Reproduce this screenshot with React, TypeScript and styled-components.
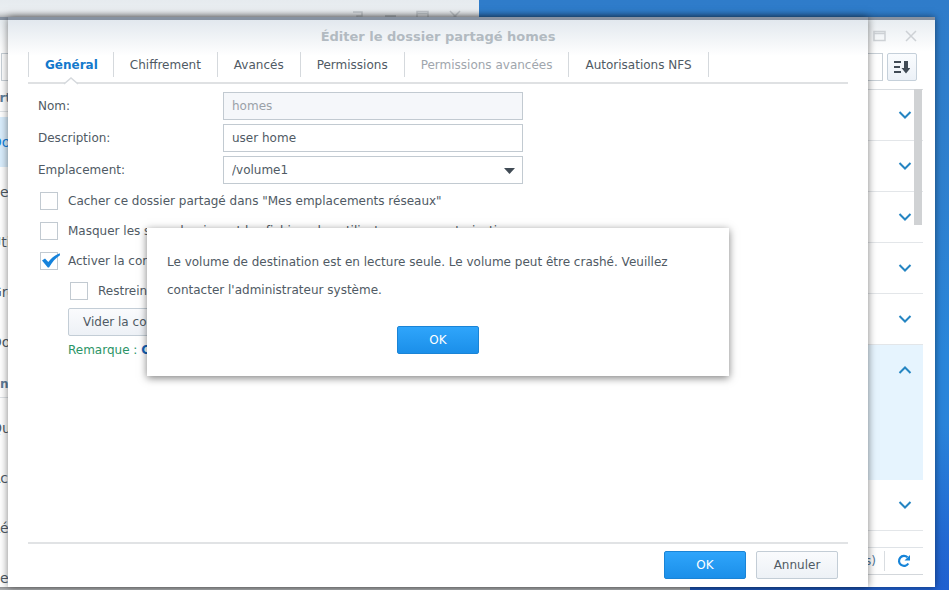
import React from "react";
import styled, { createGlobalStyle, css } from "styled-components";

const font = '"DejaVu Sans", Verdana, sans-serif';

const Global = createGlobalStyle`
  *, *::before, *::after { box-sizing: border-box; }
  html, body, #root { height: 100%; }
  body { margin: 0; overflow: hidden; font: 12px/18px ${font}; color: #505a64; }
  button, input, select { font: inherit; color: inherit; }
  button { cursor: pointer; }
`;

const Desktop = styled.main`
  position: relative;
  height: 100vh;
  overflow: hidden;
  background: linear-gradient(180deg, #2f7cca 0%, #2f80ce 30%, #2a86da 60%, #2a84da 72%, #2268d2 92%, #2060d0 100%);
`;

const windowFrame = css`
  position: absolute;
  display: flex;
  flex-direction: column;
  background: #fff;
`;

const BackWindow = styled.section`
  ${windowFrame}
  top: 0;
  left: 0;
  width: 479px;
  height: 200px;
  background: linear-gradient(180deg, #e6ebef 0, #eef1f4 20px);
`;

const BackWindowFoot = styled.section`
  ${windowFrame}
  bottom: 0;
  left: 0;
  width: 690px;
  height: 40px;
  background: #c4c6c8;
`;

const BackWindowTools = styled.div`
  display: flex;
  justify-content: flex-end;
  gap: 20px;
  padding: 10px 18px 0 0;
  color: #c6cbd0;
`;

const Explorer = styled.section`
  ${windowFrame}
  top: 17px;
  left: -40px;
  right: 14px;
  bottom: 3px;
  border-top: 3px solid #8792a1;
  box-shadow: 0 0 7px rgba(0, 0, 0, 0.5);
  background: linear-gradient(180deg, #e8edf1 0, #fff 32px);
`;

const ExplorerTools = styled.div`
  display: flex;
  justify-content: flex-end;
  gap: 19px;
  height: 33px;
  padding: 10px 18px 0 0;
  color: #cdd1d5;
`;

const ExplorerBody = styled.div`
  display: flex;
  flex: 1;
  min-height: 0;
`;

const Sidebar = styled.nav`
  display: flex;
  flex-direction: column;
  width: 240px;
  overflow: hidden;
`;

const SearchBox = styled.input`
  flex: none;
  height: 28px;
  margin-left: 41px;
  border: 1px solid #c8d0d7;
  background: #fff;
`;

const GroupTitle = styled.h2`
  display: flex;
  flex: none;
  align-items: center;
  height: 31px;
  margin: 0 0 5px;
  padding: 4px 0 0 23px;
  border-bottom: 1px solid #dfe3e7;
  color: #5f7c98;
  font-size: 12px;
`;

const NavItem = styled.a<{ $active?: boolean }>`
  display: flex;
  flex: none;
  align-items: center;
  height: 50px;
  padding-left: 31px;
  font-size: 14px;
  text-decoration: none;
  white-space: nowrap;
  color: ${(p) => (p.$active ? "#1582dc" : "#505a64")};
  background: ${(p) => (p.$active ? "#d9edfc" : "transparent")};
`;

const FolderPane = styled.div`
  display: flex;
  flex: 1;
  flex-direction: column;
  padding: 0 12px 12px 20px;
`;

const FolderToolbar = styled.div`
  display: flex;
  justify-content: flex-end;
  gap: 4px;
  padding: 0 6px 8px 0;
`;

const FilterBox = styled.input`
  width: 180px;
  height: 28px;
  border: 1px solid #c8d0d7;
  background: #fff;
`;

const SortButton = styled.button`
  display: grid;
  place-items: center;
  width: 30px;
  height: 28px;
  padding: 0;
  border: 1px solid #c5d0da;
  border-radius: 2px;
  background: linear-gradient(180deg, #fafcfe, #ecf1f7);
  color: #414b55;
`;

const FolderList = styled.div`
  position: relative;
  flex: 1;
  border-top: 1px solid #d9dde1;
`;

const FolderRow = styled.button<{ $open?: boolean }>`
  display: flex;
  align-items: flex-start;
  justify-content: flex-end;
  width: 100%;
  height: ${(p) => (p.$open ? 135 : 51)}px;
  padding: 21px 11px 0 0;
  border: 0;
  border-bottom: 1px solid ${(p) => (p.$open ? "#e6f4fe" : "#e3e6e9")};
  background: ${(p) => (p.$open ? "#e6f4fe" : "transparent")};
  color: #2585c2;
`;

const ScrollThumb = styled.div`
  position: absolute;
  top: -1px;
  right: 1px;
  width: 8px;
  height: 136px;
  background: #d0d2d4;
`;

const StatusBar = styled.div`
  display: flex;
  align-items: center;
  justify-content: flex-end;
  gap: 8px;
  height: 28px;
  border-top: 1px solid #dfe3e7;
  border-bottom: 1px solid #d3d7db;
  color: #4f7698;
`;

const RefreshButton = styled.button`
  display: grid;
  place-items: center;
  width: 39px;
  height: 20px;
  padding: 0;
  border: 0;
  border-left: 1px solid #d9dde1;
  background: none;
  color: #1583d8;
`;

const EditDialog = styled.section`
  ${windowFrame}
  top: 17px;
  left: 8px;
  right: 81px;
  bottom: 3px;
  border-top: 3px solid #8792a1;
  background: linear-gradient(180deg, #e2e8ee 0, #fff 36px);
  box-shadow: 0 0 8px rgba(0, 0, 0, 0.5);
`;

const DialogTitle = styled.h1`
  margin: 0;
  padding: 8px 0 6px;
  color: #b2bac1;
  font-size: 13px;
  line-height: 18px;
  text-align: center;
`;

const Tabs = styled.div`
  display: flex;
  height: 32px;
  margin: 0 20px;
  border-bottom: 2px solid #dfe1e3;
`;

const Tab = styled.button<{ $active?: boolean }>`
  position: relative;
  height: 25px;
  padding: 0 ${(p) => (p.$active ? 15 : 16)}px 0 16px;
  border: 0;
  border-left: 1px solid #d5d9dd;
  background: none;
  white-space: nowrap;
  color: ${(p) => (p.$active ? "#1379cc" : "#505a64")};
  font-weight: ${(p) => (p.$active ? 700 : 400)};

  &:last-child { border-right: 1px solid #d5d9dd; }
  &:disabled { color: #a0a6ad; cursor: default; }
`;

const Notch = styled.svg`
  position: absolute;
  top: 25px;
  left: calc(50% - 8px);
`;

const Form = styled.form`
  display: flex;
  flex: 1;
  flex-direction: column;
  padding: 8px 30px 0;
`;

const Field = styled.div`
  display: grid;
  grid-template-columns: 185px minmax(0, 300px);
  height: 28px;
  margin-bottom: 4px;
`;

const FieldLabel = styled.label`
  line-height: 28px;
`;

const TextInput = styled.input`
  width: 100%;
  height: 28px;
  padding: 0 8px;
  border: 1px solid #c2cad1;
  border-radius: 0;
  background: #fff;

  &:disabled { background: #f5f7fa; color: #9aa1a8; }
`;

const SelectWrap = styled.div`
  position: relative;
`;

const Select = styled.select`
  appearance: none;
  width: 100%;
  height: 28px;
  padding: 0 8px;
  border: 1px solid #c2cad1;
  border-radius: 0;
  background: #fff;
`;

const SelectArrow = styled.svg`
  position: absolute;
  top: 12px;
  right: 8px;
  pointer-events: none;
`;

const CheckLine = styled.label<{ $nested?: boolean }>`
  display: flex;
  align-items: center;
  gap: 10px;
  height: 30px;
  padding-left: ${(p) => (p.$nested ? 32 : 2)}px;
  white-space: nowrap;
`;

const CheckGroup = styled.div`
  display: flex;
  flex-direction: column;
  margin: -2px 0 2px;
`;

const CheckBox = styled.span`
  position: relative;
  flex: none;
  width: 18px;
  height: 18px;

  input {
    appearance: none;
    display: block;
    width: 18px;
    height: 18px;
    margin: 0;
    border: 1px solid #c2cad1;
    background: #fff;
  }
  svg {
    position: absolute;
    top: 0;
    left: 0;
    display: none;
    pointer-events: none;
  }
  input:checked + svg { display: block; }
`;

const Button = styled.button<{ $primary?: boolean }>`
  height: 28px;
  min-width: 82px;
  padding: 0 14px;
  border-radius: 2px;
  border: 1px solid ${(p) => (p.$primary ? "#1a84d6" : "#c3cdd6")};
  background: ${(p) =>
    p.$primary ? "linear-gradient(180deg, #2fa5fb, #1b8fe9)" : "linear-gradient(180deg, #fafbfd, #edf1f6)"};
  color: ${(p) => (p.$primary ? "#fff" : "#505a64")};
`;

const Indented = styled.div`
  padding-left: 30px;
`;

const Remark = styled.p`
  margin: 5px 0 0;
  padding-left: 30px;
  color: #2b9466;
`;

const RemarkLink = styled.a`
  color: #1263b8;
  font-weight: 700;
  text-decoration: none;
`;

const DialogFooter = styled.footer`
  display: flex;
  justify-content: flex-end;
  gap: 10px;
  margin: 0 20px;
  padding: 7px 10px 8px;
  border-top: 2px solid #e1e3e5;
`;

const AlertLayer = styled.div`
  position: absolute;
  inset: -3px 0 0;
  display: grid;
  place-items: center;
`;

const Alert = styled.div`
  display: flex;
  flex-direction: column;
  align-items: center;
  gap: 22px;
  width: min(582px, 100%);
  padding: 20px 20px 22px;
  background: #fff;
  box-shadow: 0 2px 8px rgba(0, 0, 0, 0.5);
`;

const AlertText = styled.p`
  width: 100%;
  margin: 0;
  line-height: 28px;
`;

const CloseIcon = () => (
  <svg width="12" height="12" viewBox="0 0 12 12" stroke="currentColor" strokeWidth="1.5" fill="none">
    <path d="M1 1l10 10M11 1L1 11" />
  </svg>
);

const MaximizeIcon = () => (
  <svg width="13" height="12" viewBox="0 0 13 12" stroke="currentColor" fill="none">
    <path d="M1 1.5h11v9H1zM1 3.5h11" strokeWidth="1.5" />
  </svg>
);

const MinimizeIcon = () => (
  <svg width="12" height="12" viewBox="0 0 12 12" stroke="currentColor" strokeWidth="2">
    <path d="M1 6h11" />
  </svg>
);

const HelpIcon = () => (
  <svg width="12" height="12" viewBox="0 0 12 12" stroke="currentColor" strokeWidth="1.5" fill="none">
    <path d="M1 2h9v4H5v3M5 10.5V12" />
  </svg>
);

const Chevron = ({ up }: { up?: boolean }) => (
  <svg width="14" height="8" viewBox="0 0 14 8" fill="none" stroke="currentColor" strokeWidth="2">
    <path d={up ? "M1.5 7L7 1.5 12.5 7" : "M1.5 1L7 6.5 12.5 1"} />
  </svg>
);

const SortIcon = () => (
  <svg width="16" height="14" viewBox="0 0 16 14" fill="currentColor">
    <path d="M0 1h7v2H0zM0 6h6v2H0zM0 11h7v2H0zM10 1h4v7h2.500L12 13.500 7.500 8H10z" />
  </svg>
);

const RefreshIcon = () => (
  <svg width="14" height="14" viewBox="0 0 14 14" fill="none" stroke="currentColor" strokeWidth="2.200">
    <path d="M11.300 9.500A5 5 0 1 1 10.500 3.300" />
    <path d="M13 1v5.500H7.500z" fill="currentColor" stroke="none" />
  </svg>
);

const sharing = ["Dossier partagé", "Services de fichiers", "Utilisateur", "Groupe", "Domaine/LDAP"];
const connectivity = ["QuickConnect", "Accès externe", "Réseau", "Serveur DHCP"];
const folders = [false, false, false, false, false, true, false];
const tabs = [
  { label: "Général", active: true },
  { label: "Chiffrement" },
  { label: "Avancés" },
  { label: "Permissions" },
  { label: "Permissions avancées", disabled: true },
  { label: "Autorisations NFS" },
];

function Check({ label, checked, nested }: { label: string; checked?: boolean; nested?: boolean }) {
  return (
    <CheckLine $nested={nested}>
      <CheckBox>
        <input type="checkbox" defaultChecked={checked} />
        <svg width="21" height="18" viewBox="0 0 21 18" fill="#1583dc">
          <path d="M2 8.500L5 6.500 8.300 10C11.500 6 15 3 19.800 1.300L20 3.200C15.500 6 11.800 10.500 9 15.500H7.800z" />
        </svg>
      </CheckBox>
      {label}
    </CheckLine>
  );
}

export default function App() {
  return (
    <Desktop>
      <Global />
      <BackWindow>
        <BackWindowTools>
          <HelpIcon />
          <MinimizeIcon />
          <MaximizeIcon />
          <CloseIcon />
        </BackWindowTools>
      </BackWindow>
      <BackWindowFoot />

      <Explorer>
        <ExplorerTools>
          <MaximizeIcon />
          <CloseIcon />
        </ExplorerTools>
        <ExplorerBody>
          <Sidebar>
            <SearchBox aria-label="Rechercher" />
            <GroupTitle>Partage de fichiers</GroupTitle>
            {sharing.map((item, i) => (
              <NavItem key={item} href="#" $active={i === 0}>{item}</NavItem>
            ))}
            <GroupTitle>Connectivité</GroupTitle>
            {connectivity.map((item) => (
              <NavItem key={item} href="#">{item}</NavItem>
            ))}
          </Sidebar>
          <FolderPane>
            <FolderToolbar>
              <FilterBox aria-label="Filtrer" />
              <SortButton aria-label="Trier"><SortIcon /></SortButton>
            </FolderToolbar>
            <FolderList>
              {folders.map((open, i) => (
                <FolderRow key={i} $open={open} aria-expanded={open} aria-label={`Dossier ${i + 1}`}>
                  <Chevron up={open} />
                </FolderRow>
              ))}
              <ScrollThumb />
            </FolderList>
            <StatusBar>
              <span>7 élément(s)</span>
              <RefreshButton aria-label="Actualiser"><RefreshIcon /></RefreshButton>
            </StatusBar>
          </FolderPane>
        </ExplorerBody>
      </Explorer>

      <EditDialog role="dialog" aria-labelledby="dialog-title">
        <DialogTitle id="dialog-title">Éditer le dossier partagé homes</DialogTitle>
        <Tabs role="tablist">
          {tabs.map((t) => (
            <Tab key={t.label} role="tab" type="button" aria-selected={!!t.active} $active={t.active} disabled={t.disabled}>
              {t.label}
              {t.active && (
                <Notch width="16" height="8" viewBox="0 0 16 8">
                  <path d="M0 8L8 1l8 7z" fill="#fff" />
                  <path d="M1 7L8 1l7 6" fill="none" stroke="#d5d9dd" strokeWidth="1.500" />
                </Notch>
              )}
            </Tab>
          ))}
        </Tabs>
        <Form>
          <Field>
            <FieldLabel htmlFor="name">Nom:</FieldLabel>
            <TextInput id="name" defaultValue="homes" disabled />
          </Field>
          <Field>
            <FieldLabel htmlFor="description">Description:</FieldLabel>
            <TextInput id="description" defaultValue="user home" />
          </Field>
          <Field>
            <FieldLabel htmlFor="location">Emplacement:</FieldLabel>
            <SelectWrap>
              <Select id="location" defaultValue="/volume1">
                <option>/volume1</option>
              </Select>
              <SelectArrow width="11" height="6" viewBox="0 0 11 6"><path d="M0 0h11L5.500 6z" fill="#414b55" /></SelectArrow>
            </SelectWrap>
          </Field>
          <CheckGroup>
            <Check label={'Cacher ce dossier partagé dans "Mes emplacements réseaux"'} />
            <Check label="Masquer les sous-dossiers et les fichiers des utilisateurs sans autorisation" />
            <Check label="Activer la corbeille" checked />
            <Check label="Restreindre l'accès aux administrateurs" nested />
          </CheckGroup>
          <Indented>
            <Button type="button">Vider la corbeille</Button>
          </Indented>
          <Remark>
            Remarque : <RemarkLink href="#">Configurer la corbeille</RemarkLink>
          </Remark>
        </Form>
        <DialogFooter>
          <Button type="button" $primary>OK</Button>
          <Button type="button">Annuler</Button>
        </DialogFooter>
        <AlertLayer>
          <Alert role="alertdialog" aria-describedby="alert-text">
            <AlertText id="alert-text">
              Le volume de destination est en lecture seule. Le volume peut être crashé. Veuillez contacter
              l'administrateur système.
            </AlertText>
            <Button type="button" $primary>OK</Button>
          </Alert>
        </AlertLayer>
      </EditDialog>
    </Desktop>
  );
}
